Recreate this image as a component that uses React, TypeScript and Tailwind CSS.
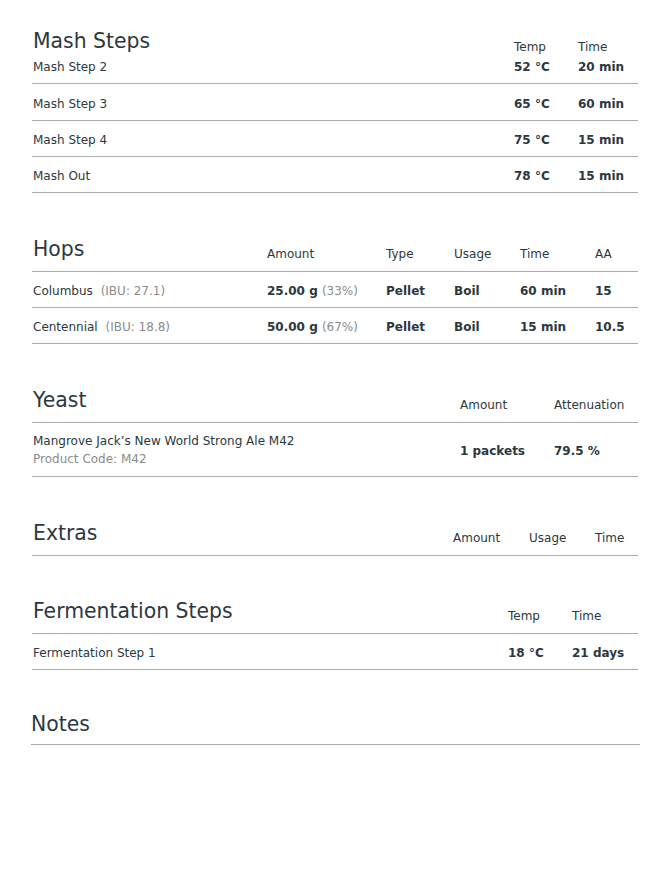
import React from "react";

const font = { fontFamily: '"DejaVu Sans", Verdana, sans-serif' };

function Header({ title, cols }: { title: string; cols: { label: string; w: string }[] }) {
  return (
    <div className="flex items-end pb-[9px] border-b border-[#aaaaaa]">
      <div className="flex-1 text-[20.4px] leading-[24px] mb-px pl-px">{title}</div>
      {cols.map((c) => (
        <div key={c.label} className={`${c.w} text-[12px] leading-[16px]`}>
          {c.label}
        </div>
      ))}
    </div>
  );
}

function Row({
  name,
  vals,
  widths,
  tall,
}: {
  name: React.ReactNode;
  vals: React.ReactNode[];
  widths: string[];
  tall?: boolean;
}) {
  return (
    <div
      className={`flex items-center ${tall ? "h-[37px] pt-[3px]" : "h-[36px] pt-[2px]"} border-b border-[#aaaaaa] text-[12px] leading-[16px]`}
    >
      <div className="flex-1 pl-px">{name}</div>
      {vals.map((v, i) => (
        <div key={i} className={`${widths[i]} font-bold`}>
          {v}
        </div>
      ))}
    </div>
  );
}

export default function App() {
  const mashW = ["w-[64px]", "w-[60px]"];
  const hopW = ["w-[119px]", "w-[68px]", "w-[66px]", "w-[75px]", "w-[43px]"];
  const fermW = ["w-[64px]", "w-[66px]"];
  return (
    <div className="bg-white min-h-[885px] text-[#2c3840] pt-[29px]" style={font}>
      <div className="ml-[32px] w-[606px]">
        {/* Mash Steps */}
        <div>
          <div className="flex items-end h-[26px]">
            <div className="flex-1 text-[20.4px] leading-[24px] mb-[2px] pl-px">Mash Steps</div>
            <div className="w-[64px] text-[12px] leading-[16px]">Temp</div>
            <div className="w-[60px] text-[12px] leading-[16px]">Time</div>
          </div>
          <div className="flex items-end h-[29px] pb-[8px] border-b border-[#aaaaaa] text-[12px] leading-[16px]">
            <div className="flex-1 pl-px">Mash Step 2</div>
            <div className="w-[64px] font-bold">52 °C</div>
            <div className="w-[60px] font-bold">20 min</div>
          </div>
          <Row name="Mash Step 3" vals={["65 °C", "60 min"]} widths={mashW} tall />
          <Row name="Mash Step 4" vals={["75 °C", "15 min"]} widths={mashW} />
          <Row name="Mash Out" vals={["78 °C", "15 min"]} widths={mashW} />
        </div>

        {/* Hops */}
        <div className="mt-[44px]">
          <Header
            title="Hops"
            cols={[
              { label: "Amount", w: "w-[119px]" },
              { label: "Type", w: "w-[68px]" },
              { label: "Usage", w: "w-[66px]" },
              { label: "Time", w: "w-[75px]" },
              { label: "AA", w: "w-[43px]" },
            ]}
          />
          <Row
            name={
              <>
                Columbus <span className="text-[#8c8c8c] ml-[4px]">(IBU: 27.1)</span>
              </>
            }
            vals={[
              <>
                25.00 g <span className="font-normal text-[#8c8c8c]">(33%)</span>
              </>,
              "Pellet",
              "Boil",
              "60 min",
              "15",
            ]}
            widths={hopW}
          />
          <Row
            name={
              <>
                Centennial <span className="text-[#8c8c8c] ml-[4px]">(IBU: 18.8)</span>
              </>
            }
            vals={[
              <>
                50.00 g <span className="font-normal text-[#8c8c8c]">(67%)</span>
              </>,
              "Pellet",
              "Boil",
              "15 min",
              "10.5",
            ]}
            widths={hopW}
          />
        </div>

        {/* Yeast */}
        <div className="mt-[44px]">
          <Header
            title="Yeast"
            cols={[
              { label: "Amount", w: "w-[94px]" },
              { label: "Attenuation", w: "w-[84px]" },
            ]}
          />
          <div className="flex items-center h-[54px] border-b border-[#aaaaaa] text-[12px]">
            <div className="flex-1 pl-px leading-[18px] pt-px">
              <div>Mangrove Jack’s New World Strong Ale M42</div>
              <div className="text-[#8c8c8c]">Product Code: M42</div>
            </div>
            <div className="w-[94px] font-bold leading-[16px] pt-[3px]">1 packets</div>
            <div className="w-[84px] font-bold leading-[16px] pt-[3px]">79.5 %</div>
          </div>
        </div>

        {/* Extras */}
        <div className="mt-[44px]">
          <Header
            title="Extras"
            cols={[
              { label: "Amount", w: "w-[76px]" },
              { label: "Usage", w: "w-[66px]" },
              { label: "Time", w: "w-[43px]" },
            ]}
          />
        </div>

        {/* Fermentation Steps */}
        <div className="mt-[43px]">
          <Header
            title="Fermentation Steps"
            cols={[
              { label: "Temp", w: "w-[64px]" },
              { label: "Time", w: "w-[66px]" },
            ]}
          />
          <Row name="Fermentation Step 1" vals={["18 °C", "21 days"]} widths={fermW} />
        </div>
      </div>

      {/* Notes */}
      <div className="ml-[31px] w-[609px] mt-[42px]">
        <div className="pb-[8px] border-b border-[#aaaaaa]">
          <div className="text-[20.4px] leading-[24px]">Notes</div>
        </div>
      </div>
    </div>
  );
}
